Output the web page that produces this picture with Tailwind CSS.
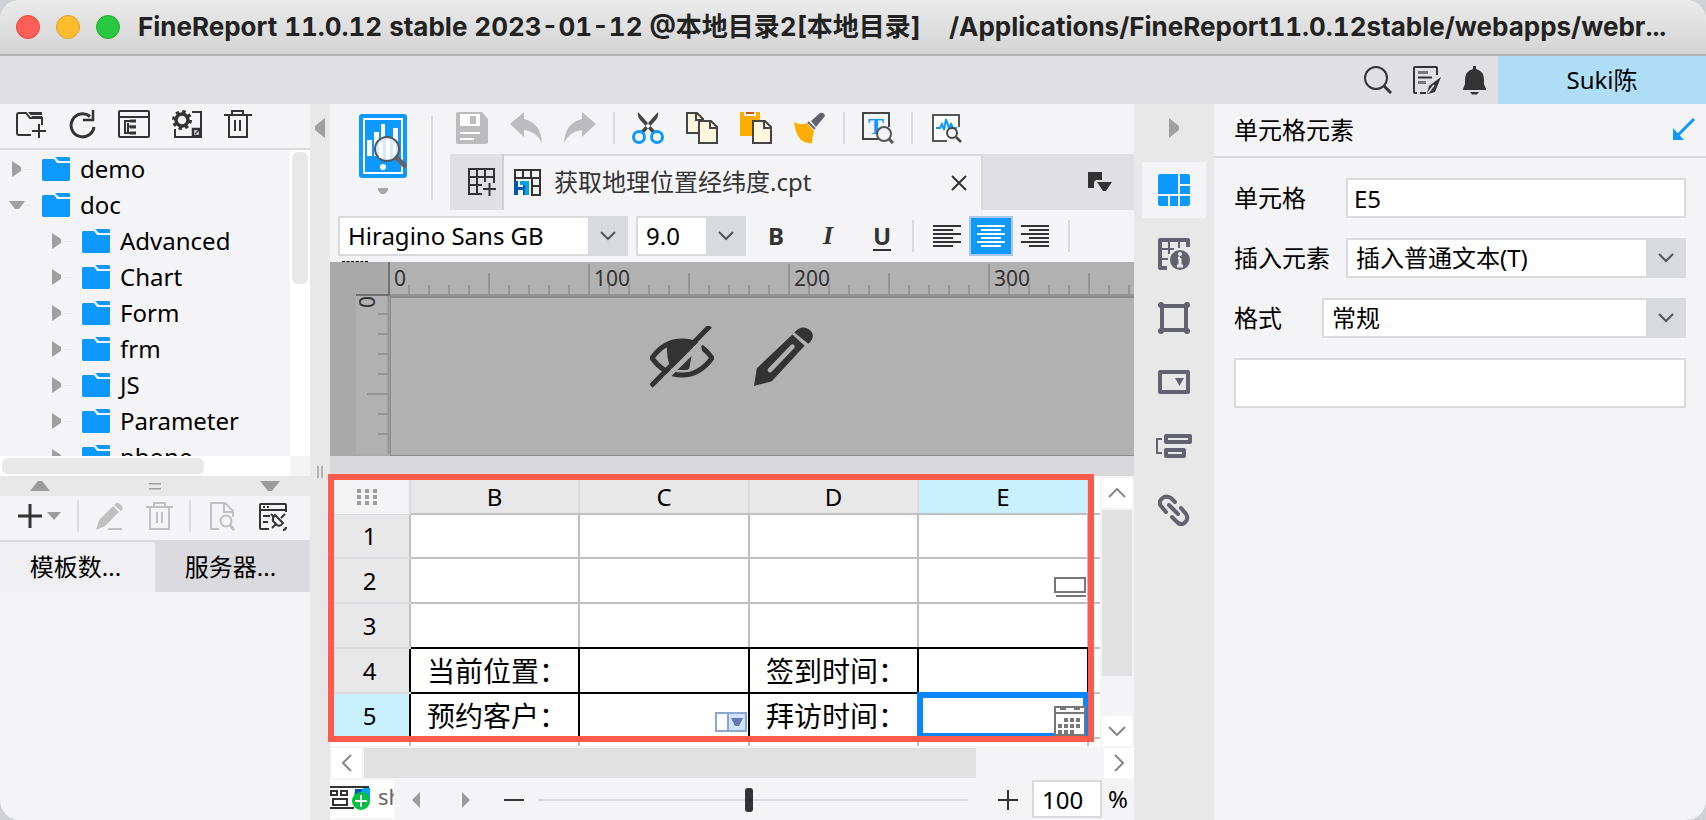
<!DOCTYPE html>
<html lang="zh-CN">

<head>
    <meta charset="UTF-8" />
    <meta name="viewport" content="width=device-width, initial-scale=1.0" />
    <title>FineReport 11.0.12</title>
    <script src="https://cdn.jsdelivr.net/npm/@tailwindcss/browser@4"></script>
</head>

<body class="bg-[#d0d2d6] text-black text-2xl leading-8 font-['Noto_Sans','Noto_Sans_CJK_SC',sans-serif]">
    <div class="h-screen flex flex-col rounded-[20px] overflow-hidden bg-[#f4f4f7]">

        <!-- Title bar -->
        <header class="h-14 shrink-0 flex items-center gap-4 px-4 border-b-2 border-[#b4b4b4] bg-linear-to-b from-[#ebebeb] to-[#d4d4d4]">
            <div class="flex gap-4 shrink-0">
                <button aria-label="关闭" class="size-6 rounded-full bg-[#ff5f57] border border-[#e2463f]"></button>
                <button aria-label="最小化" class="size-6 rounded-full bg-[#febc2e] border border-[#e0a028]"></button>
                <button aria-label="缩放" class="size-6 rounded-full bg-[#28c840] border border-[#1dad2b]"></button>
            </div>
            <h1 class="flex-1 pl-0.5 font-bold text-[26px] tabular-nums text-[#222] whitespace-pre overflow-hidden font-['Inter','Noto_Sans_CJK_SC',sans-serif]">FineReport 11.0.12 stable 2023-01-12 @本地目录2[本地目录]    /Applications/FineReport11.0.12stable/webapps/webr...</h1>
        </header>

        <!-- Menu bar -->
        <div class="h-12 shrink-0 flex items-center justify-end bg-[#e0e0e2]">
            <div class="flex items-center gap-4 pr-2">
                <button aria-label="搜索"><svg class="size-8" viewBox="0 0 32 32" fill="none" stroke="#333" stroke-width="2"><circle cx="14" cy="14" r="11" /><path d="M22 22l7 7" stroke-width="3" /></svg></button>
                <button aria-label="日志"><svg class="size-8" viewBox="0 0 32 32" fill="none" stroke="#333" stroke-width="2"><path d="M27 11V4q0-1-1-1H5q-1 0-1 1v24q0 1 1 1h2M10 29h6" /><path d="M8 8.500h10M8 18.500h8" stroke-width="3" stroke="#777" /><path d="M8 13.500h14" /><path d="M31 13l-6 15-7 2-1-1 2-7z" fill="#333" stroke="none" /><path d="M18 29l6-8" stroke="#e0e0e2" stroke-width="1.500" /></svg></button>
                <button aria-label="通知"><svg class="size-8" viewBox="0 0 32 32" fill="#333"><path d="M15 2h3v3q8 2 8 11v4l2 5v1H5v-1l2-5v-4q0-9 8-11zM12 28h9l-2 2.500h-5z" /></svg></button>
            </div>
            <button class="w-[208px] h-full bg-[#afddf5]">Suki陈</button>
        </div>

        <div class="flex-1 min-h-0 flex">

            <!-- Left panel -->
            <aside class="w-[310px] shrink-0 flex flex-col">
                <div class="h-[46px] shrink-0 flex items-start gap-5 pl-3.5 pt-1 border-b-2 border-[#dadadf] text-[#333]">
                    <button aria-label="新建文件夹"><svg class="size-8" viewBox="0 0 32 32" fill="none" stroke="currentColor" stroke-width="2"><path d="M17 27H5q-2 0-2-2V7q0-2 2-2h7l4 5h12v7" /><path d="M14 4h14v6H19z" fill="currentColor" stroke="none" /><path d="M17 7.500h11" stroke="#f4f4f7" stroke-width="1" /><path d="M18 23h14M25 16v14" /></svg></button>
                    <button aria-label="刷新"><svg class="size-8" viewBox="0 0 32 32" fill="none" stroke="currentColor" stroke-width="3"><path d="M28 19a11.500 11.500 0 1 1-4-10.500" /><path d="M27 2v10H17" stroke-width="2.500" /></svg></button>
                    <button aria-label="位置"><svg class="size-8" viewBox="0 0 32 32" fill="none" stroke="currentColor" stroke-width="2"><rect x="1" y="3" width="30" height="26" rx="1" /><path d="M1 9h30" /><path d="M7 12v13h11M7 13h11M10 15v9M10 18.500h8" /><path d="M12 13h6M12 19h6M12 25h6" stroke-width="3" /></svg></button>
                    <button aria-label="设置"><svg class="size-8" viewBox="0 0 32 32" fill="none" stroke="currentColor"><circle cx="12" cy="12" r="8.500" stroke-width="3" stroke-dasharray="3.340 3.340" /><circle cx="12" cy="12" r="6" stroke-width="3.500" /><path d="M22 4h9v25H5v-8" stroke-width="2" /><path d="M23 21h7v7h-7z" stroke-width="2.500" /><path d="M25 26l4-4" stroke-width="1.500" /></svg></button>
                    <button aria-label="删除"><svg class="size-8" viewBox="0 0 32 32" fill="none" stroke="currentColor" stroke-width="2"><path d="M2 7h28M10 7V3h11v4M7 7v22h18V7M13 12v11M18 12v11" /></svg></button>
                </div>

                <div class="h-[306px] shrink-0 flex">
                    <ul class="flex-1 overflow-hidden" id="tree"></ul>
                    <div class="w-5 bg-white p-0.5"><div class="h-[132px] rounded-md bg-[#e8e8e8]"></div></div>
                </div>
                <div class="h-5 shrink-0 flex">
                    <div class="flex-1 bg-white p-0.5"><div class="w-[202px] h-4 rounded-md bg-[#e8e8e8]"></div></div>
                    <div class="w-5"></div>
                </div>
                <div class="h-5 shrink-0 flex items-center justify-between px-[30px] bg-[#e8e8e8]">
                    <svg class="w-5 h-2.5" viewBox="0 0 20 10" fill="#9c9c9c"><path d="M0 10L8 0h4l8 10z" /></svg>
                    <svg class="w-3 h-2.5" viewBox="0 0 12 10" fill="#9c9c9c"><path d="M0 2h12v1.500H0zM0 7h12v1.500H0z" /></svg>
                    <svg class="w-5 h-2.5" viewBox="0 0 20 10" fill="#9c9c9c"><path d="M0 0h20l-8 10H8z" /></svg>
                </div>

                <div class="h-[46px] shrink-0 flex items-center pl-4 border-b-2 border-[#dadadf] pb-1">
                    <button aria-label="添加数据集" class="w-[61px]"><svg class="w-12 h-7" viewBox="0 0 48 28" fill="none"><path d="M2 14h24M14 2v24" stroke="#333" stroke-width="3" /><path d="M31 10h14l-7 8z" fill="#9c9c9c" /></svg></button>
                    <span class="w-0.5 h-8 bg-[#dadadd]"></span>
                    <button aria-label="编辑" class="ml-3.5"><svg class="size-8" viewBox="0 0 32 32" fill="#c0c0c0"><path d="M3 30l3-10L20 6l6 6-14 14zM22 4q2-2 5 0 4 3 2 6l-1 1-7-6zM16 28h13v2H14z" /></svg></button>
                    <button aria-label="删除数据集" class="ml-[18px]"><svg class="size-8" viewBox="0 0 32 32" fill="none" stroke="#c0c0c0" stroke-width="2"><path d="M3 7h27M11 7V3h11v4M7 7v22h19V7M14 12v11M19 12v11" /></svg></button>
                    <span class="w-0.5 h-8 ml-3.5 bg-[#dadadd]"></span>
                    <button aria-label="预览数据" class="ml-4"><svg class="size-8" viewBox="0 0 32 32" fill="none" stroke="#c0c0c0" stroke-width="2"><path d="M12 29H4V3h14l8 8v6" /><path d="M17 3v9h9" /><circle cx="19" cy="21" r="5.500" /><path d="M23 25l4 5" stroke-width="3" /></svg></button>
                    <button aria-label="连接管理" class="ml-[18px]"><svg class="size-8" viewBox="0 0 32 32" fill="none" stroke="#333" stroke-width="2"><path d="M12 29H4q-1 0-1-1V5q0-1 1-1h24q1 0 1 1v7M3 10h26M6 16h7M6 22h5" /><path d="M6 7h2M10 7h2" /><path d="M24 18l4-4M15 28l4-4" /><path d="M18 15l8 8q-3 4-6 2l-4-4q-1-3 2-6z" /><path d="M14 14l3 3M26 30q3 0 3-3" /></svg></button>
                </div>
                <div class="h-[50px] shrink-0 flex">
                    <button class="flex-1 pr-1 bg-[#efeff1]">模板数...</button>
                    <button class="flex-1 pr-1 bg-[#dadadf]">服务器...</button>
                </div>
            </aside>

            <!-- Left splitter -->
            <div class="w-5 shrink-0 bg-[#e8e8e8] flex flex-col items-center">
                <svg class="w-2.5 h-5 mt-3.5" viewBox="0 0 10 20" fill="#a0a0a0"><path d="M10 0v20L0 12V8z" /></svg>
                <div class="mt-[328px] w-1.5 h-3 border-x-2 border-[#b0b0b0]"></div>
            </div>

            <!-- Designer -->
            <main class="flex-1 min-w-0 flex flex-col">
                <div class="h-[106px] shrink-0 flex">
                    <div class="w-[101px] shrink-0 flex flex-col items-center pt-2.5 pl-1">
                        <button aria-label="模板预览"><svg class="w-12 h-16" viewBox="0 0 48 64" fill="none"><rect width="48" height="64" rx="3" fill="#0d99ff" /><rect x="5" y="5" width="38" height="54" stroke="#fff" stroke-width="2" /><path d="M8 26h5v16H8zM15 18h5v24h-5zM22 10h4v32h-4zM34 14h5v28h-5z" fill="#fff" /><circle cx="24" cy="53" r="3" fill="#fff" /><path d="M37 43l10 10" stroke="#666" stroke-width="5" /><circle cx="28" cy="35" r="12" fill="#d4eafc" stroke="#555" stroke-width="2" /><path d="M20 28h4v16h-4zM27 25h4v20h-4zM34 29h3v12h-3z" fill="#fff" /></svg></button>
                        <svg class="w-2.5 h-1.5 mt-2.5" viewBox="0 0 10 6" fill="#a6a6a6"><path d="M0 0h10v2L7 6H3L0 2z" /></svg>
                    </div>
                    <div class="w-0.5 h-[84px] mt-3 bg-[#dadadd]"></div>
                    <div class="flex-1 min-w-0 pl-[17px]">
                        <div class="h-[50px] flex items-center gap-[17px] pl-1.5 pb-0.5">
                            <div class="flex gap-[22px]">
                                <button aria-label="保存"><svg class="size-8" viewBox="0 0 32 32"><path d="M2 0h24l6 7v23q0 2-2 2H2q-2 0-2-2V2q0-2 2-2z" fill="#bcbcbe" /><path d="M4 2h20v12H4zM4 20h20v2H4zM4 26h14v2H4z" fill="#fff" /><path d="M14 4h6v8h-6z" fill="#bcbcbe" /></svg></button>
                                <button aria-label="撤销"><svg class="size-8" viewBox="0 0 32 32" fill="#bcbcbe"><path d="M0 12L14 0v7q17 4 18 24-6-12-18-13v7z" /></svg></button>
                                <button aria-label="重做"><svg class="size-8" viewBox="0 0 32 32" fill="#bcbcbe"><path d="M32 12L18 0v7Q1 11 0 31q6-12 18-13v7z" /></svg></button>
                            </div>
                            <span class="w-0.5 h-8 bg-[#dadadd]"></span>
                            <div class="flex gap-[22px]">
                                <button aria-label="剪切"><svg class="size-8" viewBox="0 0 32 32" fill="none"><path d="M6 0q-1 5 3 9l12 13 2-3zM26 0q1 5-3 9L11 22l-2-3z" fill="#444" /><circle cx="7" cy="25" r="5.500" stroke="#0d99ff" stroke-width="3" /><circle cx="25" cy="25" r="5.500" stroke="#0d99ff" stroke-width="3" /></svg></button>
                                <button aria-label="复制"><svg class="size-8" viewBox="0 0 32 32" fill="#fff6e0" stroke="#444" stroke-width="2"><path d="M1 1h10l6 6v14H1z" /><path d="M10 1v7h7" fill="none" /><path d="M13 9h12l6 6v16H13z" /><path d="M24 9v7h7" fill="none" /></svg></button>
                                <button aria-label="粘贴"><svg class="size-8" viewBox="0 0 32 32"><path d="M0 0h4v4h12V0h4v24H0z" fill="#ffae00" /><path d="M6 0h8v2H6z" fill="#cf5400" /><path d="M13 9h12l6 6v16H13z" fill="#fff6e0" stroke="#444" stroke-width="2" /><path d="M24 9v7h7" fill="none" stroke="#444" stroke-width="2" /></svg></button>
                                <button aria-label="格式刷"><svg class="size-8" viewBox="0 0 32 32"><path d="M0 10q7 4 13 1l7 8q-2 8-2 12Q3 33 0 10z" fill="#ffae00" /><path d="M14 10l7 7" stroke="#63636f" stroke-width="2" /><path d="M17 9l9-8q4-1 5 3l-9 11z" fill="#63636f" /></svg></button>
                            </div>
                            <span class="w-0.5 h-8 bg-[#dadadd]"></span>
                            <button aria-label="查找"><svg class="size-8" viewBox="0 0 32 32" fill="none"><path d="M16 27H1V1h26v14" stroke="#444" stroke-width="2" /><text x="14" y="22" text-anchor="middle" class="font-['Liberation_Serif',serif] font-bold text-2xl" fill="#0d99ff">T</text><circle cx="22" cy="22" r="7" fill="#f4f4f7" stroke="#555" stroke-width="2" /><path d="M27 27l4 4" stroke="#555" stroke-width="3" /></svg></button>
                            <span class="w-0.5 h-8 bg-[#dadadd]"></span>
                            <button aria-label="性能监控"><svg class="size-8" viewBox="0 0 32 32" fill="none"><path d="M17 29H3V3h26v12" fill="#fff" stroke="#555" stroke-width="2" /><path d="M6 16h4l2-4 2 6 2-11 3 9 2-4 2 4h4" stroke="#0d99ff" stroke-width="2" /><circle cx="22" cy="21" r="5" fill="#f4f4f7" stroke="#444" stroke-width="2" /><path d="M26 25l5 5" stroke="#444" stroke-width="2.500" /></svg></button>
                        </div>
                        <!-- Template tabs -->
                        <div class="h-14 flex bg-[#e0e0e2]">
                            <button aria-label="新建模板" class="w-[54px] shrink-0 flex items-center justify-end pr-1.5 border-r-2 border-[#cfcfd2]"><svg class="size-7" viewBox="0 0 28 28" fill="none" stroke="#333" stroke-width="2"><path d="M14 26H1V1h25v14M1 9h25M1 17h13M9 1v25M17 1v13" /><path d="M15 21h13M21.500 15v13" /></svg></button>
                            <div class="w-[479px] flex items-center pl-2.5 pr-3.5 bg-[#f4f4f7] border-t-2 border-r-2 border-[#dadadd] text-[#333]">
                                <svg class="size-7 shrink-0" viewBox="0 0 28 28" fill="none"><path d="M1 12V1h25v25h-8V10M1 9h25M9 1v8M17 1v8M18 17h8" stroke="#333" stroke-width="2" /><path d="M0 12h4v6h5v-2h2v10H9v-5H4v5H0z" fill="#0057b0" /><path d="M6 12h9v14h-4V16H6z" fill="#00a5e8" /></svg>
                                <span class="flex-1 pl-3 pb-0.5">获取地理位置经纬度.cpt</span>
                                <button aria-label="关闭模板"><svg class="size-4" viewBox="0 0 16 16" stroke="#333" stroke-width="2"><path d="M1 1l14 14M15 1L1 15" /></svg></button>
                            </div>
                            <div class="flex-1 flex items-center justify-end pr-[22px]">
                                <button aria-label="模板列表"><svg class="w-6 h-5" viewBox="0 0 24 20" fill="#333"><path d="M0 0h14v8H8l-2 2v6H0zM9 10h15l-6 9h-3z" /></svg></button>
                            </div>
                        </div>
                    </div>
                </div>

                <!-- Font bar -->
                <div class="h-[52px] shrink-0 flex items-start pl-2 pt-1.5">
                    <div class="relative w-[290px] h-10">
                        <select aria-label="字体" class="appearance-none w-full h-full bg-white border-2 border-[#dadadd] pl-2"><option>Hiragino Sans GB</option></select>
                        <span class="absolute right-0 top-0 size-10 bg-[#d9dadd] flex items-center justify-center pointer-events-none"><svg class="w-4 h-2.5" viewBox="0 0 16 10" fill="none" stroke="#555" stroke-width="2"><path d="M1 1l7 7 7-7" /></svg></span>
                    </div>
                    <div class="relative w-[110px] h-10 ml-2">
                        <select aria-label="字号" class="appearance-none w-full h-full bg-white border-2 border-[#dadadd] pl-2"><option>9.0</option></select>
                        <span class="absolute right-0 top-0 size-10 bg-[#d9dadd] flex items-center justify-center pointer-events-none"><svg class="w-4 h-2.5" viewBox="0 0 16 10" fill="none" stroke="#555" stroke-width="2"><path d="M1 1l7 7 7-7" /></svg></span>
                    </div>
                    <button class="w-8 h-10 ml-3.5 font-bold text-[#333]">B</button>
                    <button class="w-8 h-10 ml-5 font-bold italic text-[26px] text-[#333] font-['Liberation_Serif',serif]">I</button>
                    <button class="w-8 h-10 ml-[22px] font-bold underline underline-offset-4 decoration-2 text-[#333]">U</button>
                    <span class="w-0.5 h-8 mt-1 ml-3.5 bg-[#dadadd]"></span>
                    <button aria-label="左对齐" class="ml-[19px] h-10 flex items-center"><svg class="w-7 h-[22px]" viewBox="0 0 28 22" fill="#333"><path d="M0 0h28v2H0zM0 4h20v2H0zM0 8h28v2H0zM0 12h20v2H0zM0 16h28v2H0zM0 20h20v2H0z" /></svg></button>
                    <button aria-label="居中" class="ml-2 w-11 h-10 flex items-center justify-center bg-[#0d99ff] border-2 border-[#a9c8e6]"><svg class="w-7 h-[22px]" viewBox="0 0 28 22" fill="#fff"><path d="M0 0h28v2H0zM4 4h20v2H4zM0 8h28v2H0zM4 12h20v2H4zM0 16h28v2H0zM4 20h20v2H4z" /></svg></button>
                    <button aria-label="右对齐" class="ml-2 h-10 flex items-center"><svg class="w-7 h-[22px]" viewBox="0 0 28 22" fill="#333"><path d="M0 0h28v2H0zM8 4h20v2H8zM0 8h28v2H0zM8 12h20v2H8zM0 16h28v2H0zM8 20h20v2H8z" /></svg></button>
                    <span class="w-0.5 h-8 mt-1 ml-[19px] bg-[#dadadd]"></span>
                </div>

                <!-- Parameter pane with rulers -->
                <div class="relative h-[194px] shrink-0 grid grid-cols-[60px_1fr] grid-rows-[34px_1fr] bg-[#a9a9a9]">
                    <div class="absolute left-3 -top-px w-[26px] border-t border-dashed border-black"></div>
                    <div class="flex justify-end"><div class="w-[34px] border-r-2 border-b-2 border-[#707070]"></div></div>
                    <svg class="w-full h-[34px] bg-[#b1b1b1]">
                        <defs>
                            <pattern id="ticks" x="-2" width="200" height="34" patternUnits="userSpaceOnUse">
                                <path d="M1 2v32M101 11v23M21 23v11M41 23v11M61 23v11M81 23v11M121 23v11M141 23v11M161 23v11M181 23v11" stroke="#949494" stroke-width="2" />
                            </pattern>
                        </defs>
                        <rect width="100%" height="34" fill="url(#ticks)" />
                        <path d="M0 33h3000" stroke="#949494" stroke-width="2" />
                        <g fill="#333" class="text-[21px]">
                            <text x="4" y="24">0</text>
                            <text x="204" y="24">100</text>
                            <text x="404" y="24">200</text>
                            <text x="604" y="24">300</text>
                        </g>
                    </svg>
                    <svg class="w-[60px] h-full" viewBox="0 0 60 160">
                        <path d="M26 0h32v158H26z" fill="#b1b1b1" />
                        <path d="M48 18h11M48 38h11M48 58h11M48 78h11M37 98h22M48 118h11M48 138h11M58.500 0v158" stroke="#949494" stroke-width="2" />
                        <text transform="translate(45 12) rotate(-90)" class="text-[21px]" fill="#333">0</text>
                    </svg>
                    <div class="bg-[#b1b1b1] border-t-2 border-l border-b border-[#8c8c8c] flex gap-10 pl-[259px] pt-7">
                        <svg class="size-16" viewBox="0 0 64 64" fill="none"><path d="M2 32Q14 15 32 15T62 32Q50 49 32 49T2 32z" stroke="#333" stroke-width="5" /><path d="M17 16h27l-5 28H24q-8-5-7-28z" fill="#333" /><path d="M50 21q3 16-12 24" stroke="#b1b1b1" stroke-width="3" /><path d="M66 2L6 62" stroke="#b1b1b1" stroke-width="5" /><path d="M60 0L1 60" stroke="#333" stroke-width="5" /></svg>
                        <svg class="size-15" viewBox="0 0 64 64"><path d="M0 64l3-19L41 9l13 12-35 38zM43 7q8-9 16-3t-1 15z" fill="#333" /><path d="M17 47l24-25" stroke="#b1b1b1" stroke-width="5" stroke-linecap="round" /><path d="M21 43l17-18" stroke="#333" stroke-width="0" /></svg>
                    </div>
                </div>
                <div class="h-5 shrink-0 bg-[#d9d9dc]"></div>

                <!-- Sheet -->
                <div class="relative flex-1 min-h-0 flex bg-white">
                    <div class="flex-1 overflow-hidden">
                        <table class="w-[770px] table-fixed border-collapse text-center whitespace-nowrap">
                            <colgroup>
                                <col class="w-20" /><col class="w-[169px]" /><col class="w-[170px]" /><col class="w-[169px]" /><col class="w-[170px]" /><col class="w-3" />
                            </colgroup>
                            <thead>
                                <tr class="h-[38px]">
                                    <th class="border-r-2 border-b border-[#dadadf] bg-[#f4f4f7] pr-1"><svg class="w-[22px] h-4 mt-1 mx-auto" viewBox="0 0 22 16" fill="#9c9c9c"><path d="M0 0h4v4H0zM8 0h4v4H8zM16 0h4v4h-4zM0 6h4v4H0zM8 6h4v4H8zM16 6h4v4h-4zM0 12h4v4H0zM8 12h4v4H8zM16 12h4v4h-4z" /></svg></th>
                                    <th class="font-normal pt-1 pb-0 border-r-2 border-b-2 border-r-[#dadadf] border-b-[#c0c0c0] bg-[#e8e8e8]">B</th>
                                    <th class="font-normal pt-1 pb-0 border-r-2 border-b-2 border-r-[#dadadf] border-b-[#c0c0c0] bg-[#e8e8e8]">C</th>
                                    <th class="font-normal pt-1 pb-0 border-r-2 border-b-2 border-r-[#dadadf] border-b-[#c0c0c0] bg-[#e8e8e8]">D</th>
                                    <th class="font-normal pt-1 pb-0 border-r-2 border-b-2 border-r-[#dadadf] border-b-[#c0c0c0] bg-[#c9f0fe]">E</th>
                                    <th class="border-b-2 border-[#c0c0c0]"></th>
                                </tr>
                            </thead>
                            <tbody>
                                <tr class="h-11">
                                    <th class="font-normal bg-[#e8e8e8] border-b-2 border-[#dadadf]">1</th>
                                    <td class="border-2 border-[#c0c0c0]"></td><td class="border-2 border-[#c0c0c0]"></td><td class="border-2 border-[#c0c0c0]"></td><td class="border-2 border-[#c0c0c0]"></td><td class="border-y-2 border-[#c0c0c0]"></td>
                                </tr>
                                <tr class="h-[45px]">
                                    <th class="font-normal bg-[#e8e8e8] border-b-2 border-[#dadadf]">2</th>
                                    <td class="border-2 border-[#c0c0c0]"></td><td class="border-2 border-[#c0c0c0]"></td><td class="border-2 border-[#c0c0c0]"></td>
                                    <td class="border-2 border-[#c0c0c0]"><svg class="w-8 h-5 ml-auto mr-px mt-3" viewBox="0 0 32 20" fill="none" stroke="#777" stroke-width="2"><path d="M1 1h30v14H1zM2 19h30" /></svg></td>
                                    <td class="border-y-2 border-[#c0c0c0]"></td>
                                </tr>
                                <tr class="h-[45px]">
                                    <th class="font-normal bg-[#e8e8e8] border-b-2 border-[#dadadf]">3</th>
                                    <td class="border-2 border-[#c0c0c0] border-b-black"></td><td class="border-2 border-[#c0c0c0] border-b-black"></td><td class="border-2 border-[#c0c0c0] border-b-black"></td><td class="border-2 border-[#c0c0c0] border-b-black"></td><td class="border-y-2 border-[#c0c0c0]"></td>
                                </tr>
                                <tr class="h-[45px]">
                                    <th class="font-normal bg-[#e8e8e8] border-b-2 border-b-[#dadadf] border-r-2 border-r-black">4</th>
                                    <td class="border-2 border-black text-[28px] text-left pl-4">当前位置：</td><td class="border-2 border-black"></td><td class="border-2 border-black text-[28px] text-left pl-4">签到时间：</td><td class="border-2 border-black"></td><td class="border-y-2 border-y-[#c0c0c0]"></td>
                                </tr>
                                <tr class="h-[45px]">
                                    <th class="font-normal bg-[#c9f0fe] border-r-2 border-r-black">5</th>
                                    <td class="border-2 border-black text-[28px] text-left pl-4">预约客户：</td>
                                    <td class="border-2 border-black"><svg class="w-8 h-5 ml-auto mr-px mt-3" viewBox="0 0 32 20"><path d="M1 1h30v18H1z" fill="#fff" stroke="#8ba7cf" stroke-width="2" /><path d="M13 1h18v18H13z" fill="#cfe4f8" stroke="#8ba7cf" stroke-width="2" /><path d="M16 6h12l-4 8h-4z" fill="#6478b4" /></svg></td>
                                    <td class="border-2 border-black text-[28px] text-left pl-4">拜访时间：</td>
                                    <td class="relative border-2 border-black">
                                        <div class="absolute -inset-0.5 border-[6px] border-[#0a84ff]"></div>
                                        <svg class="relative w-8 h-[30px] ml-auto mr-px mt-2.5" viewBox="0 0 32 30" fill="none"><path d="M1 1h30v28H1z" fill="#fff" /><path d="M1 1h30v28H1zM1 7h30" stroke="#777" stroke-width="2" /><path d="M6 2h6v2H6zM20 2h6v2h-6zM10 12h4v4h-4zM16 12h4v4h-4zM22 12h4v4h-4zM4 18h4v4H4zM10 18h4v4h-4zM16 18h4v4h-4zM22 18h4v4h-4zM4 24h4v4H4zM10 24h4v4h-4zM16 24h4v4h-4z" fill="#777" /></svg>
                                    </td>
                                    <td class="border-y-2 border-y-[#c0c0c0]"></td>
                                </tr>
                                <tr class="h-[45px]">
                                    <th class="border-r-2 border-[#c0c0c0]"></th><td class="border-2 border-t-0 border-[#c0c0c0]"></td><td class="border-2 border-t-0 border-[#c0c0c0]"></td><td class="border-2 border-t-0 border-[#c0c0c0]"></td><td class="border-2 border-t-0 border-[#c0c0c0]"></td><td></td>
                                </tr>
                            </tbody>
                        </table>
                    </div>
                    <div class="w-[34px] shrink-0 flex flex-col gap-0.5 bg-[#f4f4f7] px-0.5 pt-0.5">
                        <button aria-label="向上滚动" class="h-[30px] bg-white flex items-center justify-center"><svg class="w-[18px] h-2.5" viewBox="0 0 18 10" fill="none" stroke="#888" stroke-width="2"><path d="M1 9l8-8 8 8" /></svg></button>
                        <div class="h-[166px] bg-[#e1e1e1]"></div>
                        <button aria-label="向下滚动" class="h-[30px] mt-auto bg-white flex items-center justify-center"><svg class="w-[18px] h-2.5" viewBox="0 0 18 10" fill="none" stroke="#888" stroke-width="2"><path d="M1 1l8 8 8-8" /></svg></button>
                    </div>
                    <div class="absolute -left-0.5 -top-0.5 bottom-1 right-10 border-[6px] border-[#ff5a4b] pointer-events-none"></div>
                </div>

                <div class="h-[34px] shrink-0 flex gap-0.5 pl-0.5 py-0.5">
                    <button aria-label="向左滚动" class="w-[30px] h-[30px] bg-white flex items-center justify-center"><svg class="w-2.5 h-[18px]" viewBox="0 0 10 18" fill="none" stroke="#888" stroke-width="2"><path d="M9 1L1 9l8 8" /></svg></button>
                    <div class="w-[612px] h-[30px] bg-[#e1e1e1]"></div>
                    <button aria-label="向右滚动" class="w-[30px] h-[30px] ml-auto bg-white flex items-center justify-center"><svg class="w-2.5 h-[18px]" viewBox="0 0 10 18" fill="none" stroke="#888" stroke-width="2"><path d="M1 1l8 8-8 8" /></svg></button>
                </div>

                <!-- Sheet tabs and zoom -->
                <div class="h-10 shrink-0 flex items-start">
                    <button class="w-16 h-[38px] flex items-start gap-2 overflow-hidden bg-white text-[#666]">
                        <svg class="w-10 h-7 mt-1 shrink-0" viewBox="0 0 40 28" fill="none"><path d="M0 3h39M0 24h24" stroke="#333" stroke-width="2" /><path d="M1 7h6v4H1zM11 7h6v4h-6zM3 15h14v6H3z" stroke="#333" stroke-width="2" /><path d="M25 5h8l-4 12h-5z" fill="#0057b0" /><path d="M33 4h7v12H28z" fill="#00a5e8" /><circle cx="31" cy="17" r="9" fill="#00c140" /><path d="M25 17h12M31 11v12" stroke="#fff" stroke-width="2" /></svg>
                        <span class="text-[22px]">sheet1</span>
                    </button>
                    <div class="flex-1 h-10 flex items-center">
                        <button aria-label="上一个" class="ml-[18px]"><svg class="w-2 h-4" viewBox="0 0 8 16" fill="#9c9c9c"><path d="M8 0v16L0 8z" /></svg></button>
                        <button aria-label="下一个" class="ml-[42px]"><svg class="w-2 h-4" viewBox="0 0 8 16" fill="#9c9c9c"><path d="M0 0v16l8-8z" /></svg></button>
                        <button aria-label="缩小" class="ml-8"><svg class="size-6" viewBox="0 0 24 24" stroke="#333" stroke-width="2"><path d="M2 12h20" /></svg></button>
                        <input type="range" min="0" max="100" value="49" aria-label="缩放" class="flex-1 min-w-0 ml-3 h-6 appearance-none bg-transparent [&::-webkit-slider-runnable-track]:h-0.5 [&::-webkit-slider-runnable-track]:bg-[#d9dadd] [&::-webkit-slider-thumb]:appearance-none [&::-webkit-slider-thumb]:w-2 [&::-webkit-slider-thumb]:h-6 [&::-webkit-slider-thumb]:-mt-[11px] [&::-webkit-slider-thumb]:rounded-[3px] [&::-webkit-slider-thumb]:bg-[#333]" />
                        <button aria-label="放大" class="ml-7"><svg class="size-6" viewBox="0 0 24 24" stroke="#333" stroke-width="2"><path d="M2 12h20M12 2v20" /></svg></button>
                    </div>
                    <label class="flex items-center ml-3"><input type="text" value="100" aria-label="缩放比例" class="w-[70px] h-[38px] bg-white border-2 border-[#dadadd] pl-2 text-2xl" /><span class="w-8 text-center">%</span></label>
                </div>
            </main>

            <!-- Icon strip -->
            <nav class="w-20 shrink-0 bg-[#e8e8e8] flex flex-col items-center gap-2">
                <svg class="w-2.5 h-5 mt-3.5 mb-4" viewBox="0 0 10 20" fill="#a0a0a0"><path d="M0 0v20l10-8V8z" /></svg>
                <button aria-label="单元格元素" class="w-16 h-14 flex items-center justify-center bg-[#f4f4f7]"><svg class="size-8" viewBox="0 0 32 32" fill="#0d99ff"><path d="M2 0h18v20H0V2q0-2 2-2zM22 0h8q2 0 2 2v8H22zM22 12h10v8H22zM0 22h10v10H2q-2 0-2-2zM12 22h8v10h-8zM22 22h10v8q0 2-2 2h-8z" /></svg></button>
                <button aria-label="单元格属性" class="w-16 h-14 flex items-center justify-center"><svg class="size-8" viewBox="0 0 32 32" fill="none" stroke="#63636f"><path d="M30 9V2H2v28h7" stroke-width="4" stroke-linejoin="round" /><path d="M11 4v12M21 4v6M4 11h12M4 21h6" stroke-width="2" /><circle cx="22" cy="22" r="10" fill="#63636f" stroke="none" /><circle cx="22" cy="16" r="2" fill="#e8e8e8" stroke="none" /><path d="M22 20v8M20 20h2M19 28h6" stroke="#e8e8e8" stroke-width="3" /></svg></button>
                <button aria-label="悬浮元素" class="w-16 h-14 flex items-center justify-center"><svg class="size-8" viewBox="0 0 32 32" fill="none" stroke="#63636f"><path d="M4 4h24v24H4z" stroke-width="4" /><g fill="#63636f" stroke="none"><circle cx="3" cy="3" r="3" /><circle cx="29" cy="3" r="3" /><circle cx="3" cy="29" r="3" /><circle cx="29" cy="29" r="3" /></g></svg></button>
                <button aria-label="控件设置" class="w-16 h-14 flex items-center justify-center"><svg class="size-8" viewBox="0 0 32 32" fill="none"><rect x="2" y="6" width="28" height="20" stroke="#63636f" stroke-width="4" stroke-linejoin="round" /><path d="M17 12h9l-4.500 8z" fill="#63636f" /></svg></button>
                <button aria-label="条件属性" class="w-16 h-14 flex items-center justify-center"><svg class="w-9 h-6" viewBox="0 0 36 24" fill="none" stroke="#63636f" stroke-linejoin="round"><path d="M6 5H1v14h5" stroke-width="2" /><path d="M10 2h24v6H10zM10 16h18v6H10z" stroke-width="4" /></svg></button>
                <button aria-label="超级链接" class="w-16 h-14 flex items-center justify-center"><svg class="size-8" viewBox="0 0 32 32" fill="none" stroke="#63636f" stroke-width="4" stroke-linecap="round"><path d="M17 8l-4-4Q8 1 4 4.500T3 12l5 6M23 14l5 6q3 5-1 8.500T19 28l-5-5M11 11l9 9" /></svg></button>
            </nav>

            <!-- Property panel -->
            <aside class="w-[492px] shrink-0">
                <div class="h-[54px] flex items-center justify-between pl-5 pr-2.5 border-b-2 border-[#dadade]">
                    <h2>单元格元素</h2>
                    <button aria-label="收起"><svg class="size-6" viewBox="0 0 24 24" fill="none" stroke="#0d99ff" stroke-width="3"><path d="M22 1L5 18" /><path d="M1 10v12h11z" fill="#0d99ff" stroke="none" /></svg></button>
                </div>
                <form class="p-5 flex flex-col gap-5">
                    <div class="h-10 flex items-center">
                        <label for="cell" class="w-28">单元格</label>
                        <input id="cell" type="text" value="E5" class="flex-1 min-w-0 h-full bg-white border-2 border-[#dadadd] px-1.5" />
                    </div>
                    <div class="h-10 flex items-center">
                        <label for="insert" class="w-28">插入元素</label>
                        <div class="relative flex-1 h-full">
                            <select id="insert" class="appearance-none w-full h-full bg-white border-2 border-[#dadadd] pl-2"><option>插入普通文本(T)</option></select>
                            <span class="absolute right-0 top-0 size-10 bg-[#d9dadd] flex items-center justify-center pointer-events-none"><svg class="w-4 h-2.5" viewBox="0 0 16 10" fill="none" stroke="#555" stroke-width="2"><path d="M1 1l7 7 7-7" /></svg></span>
                        </div>
                    </div>
                    <div class="h-10 flex items-center">
                        <label for="format" class="w-[88px]">格式</label>
                        <div class="relative flex-1 h-full">
                            <select id="format" class="appearance-none w-full h-full bg-white border-2 border-[#dadadd] pl-2"><option>常规</option></select>
                            <span class="absolute right-0 top-0 size-10 bg-[#d9dadd] flex items-center justify-center pointer-events-none"><svg class="w-4 h-2.5" viewBox="0 0 16 10" fill="none" stroke="#555" stroke-width="2"><path d="M1 1l7 7 7-7" /></svg></span>
                        </div>
                    </div>
                    <input type="text" aria-label="内容" class="w-full h-[50px] bg-white border-2 border-[#dadadd] px-2" />
                </form>
            </aside>
        </div>
    </div>

    <script>
        const folders = [
            { name: 'demo', depth: 0 },
            { name: 'doc', depth: 0, open: true },
            { name: 'Advanced', depth: 1 },
            { name: 'Chart', depth: 1 },
            { name: 'Form', depth: 1 },
            { name: 'frm', depth: 1 },
            { name: 'JS', depth: 1 },
            { name: 'Parameter', depth: 1 },
            { name: 'phone', depth: 1 }
        ];

        document.getElementById('tree').innerHTML = folders.map(f => `
            <li class="h-9 flex items-center pt-0.5 ${f.depth ? 'pl-[49px]' : 'pl-[9px]'}">
                <svg class="w-4 h-4 shrink-0" viewBox="0 0 16 16" fill="#a0a0a0"><path d="${f.open ? 'M0 4h16l-6 8H6z' : 'M3 0l9 6v4l-9 6z'}" /></svg>
                <span class="w-2 h-px mr-[9px] bg-[#e8e8ec]"></span>
                <svg class="w-7 h-6 shrink-0" viewBox="0 0 28 24" fill="#0d99ff"><path d="M1 2h11l3 4h13v17l-1 1H1l-1-1V3z" /><path d="M13 0h14l1 1v3H17z" /></svg>
                <span class="pl-2.5">${f.name}</span>
            </li>`).join('');
    </script>
</body>

</html>
